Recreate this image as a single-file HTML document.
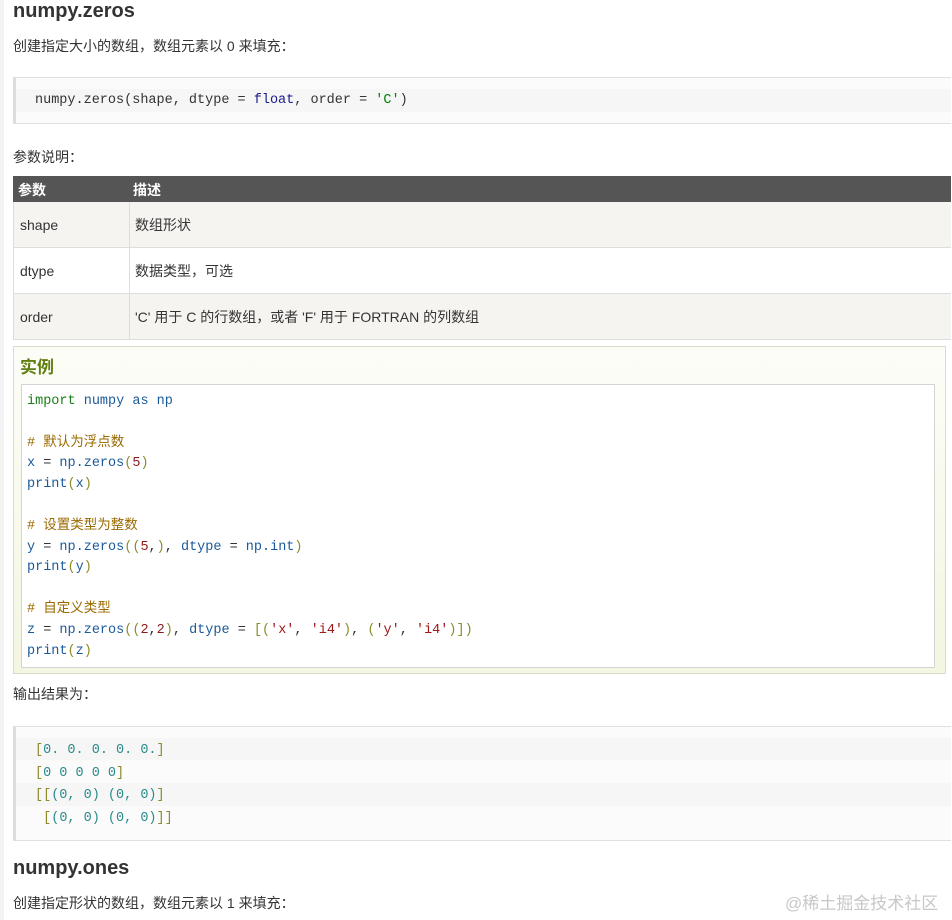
<!DOCTYPE html>
<html><head><meta charset="utf-8"><style>
body{margin:0;width:952px;height:920px;background:#fff;position:relative;overflow:hidden;font-family:"Liberation Sans","Noto Sans CJK SC",sans-serif;color:#333;font-size:14px}
.a{position:absolute;white-space:pre;line-height:18px}
.m{font-family:"Liberation Mono","Noto Sans CJK SC",monospace;font-size:13.5px}
h2{position:absolute;margin:0;font-size:20px;font-weight:bold;color:#333}
.k{color:#1a7f1a}.b{color:#1b5a9a}.c{color:#9a6a00}.n{color:#8b1a1a}.p{color:#8b8b2a}.s{color:#a0171b}.g{color:#008000}.t{color:#2a8a8a}
</style></head><body>
<div style="position:absolute;left:0;top:0;width:4px;height:920px;background:#f3f3f3"></div>
<h2 style="left:13px;top:0px">numpy.zeros</h2>
<div class="a" style="left:13px;top:37px">创建指定大小的数组，数组元素以 0 来填充：</div>
<div style="position:absolute;left:13px;top:77px;width:938px;height:47px;background:#fbfbfb;border-top:1px solid #e0e0e0;border-bottom:1px solid #e0e0e0;border-left:3px solid #ddd;box-sizing:border-box"></div>
<div style="position:absolute;left:16px;top:89px;width:935px;height:23px;background:#f6f6f6"></div>
<div class="a m" style="left:35px;top:92px;color:#333">numpy.zeros(shape, dtype = <span style="color:#1a1a8a">float</span>, order = <span class="g">'C'</span>)</div>
<div class="a" style="left:13px;top:148px">参数说明：</div>
<div style="position:absolute;left:13px;top:176px;width:938px;height:26px;background:#555"></div>
<div class="a" style="left:18px;top:181px;color:#fff;font-weight:bold">参数</div>
<div class="a" style="left:133px;top:181px;color:#fff;font-weight:bold">描述</div>
<div style="position:absolute;left:13px;top:202px;width:938px;height:46px;background:#f6f4f0;border-bottom:1px solid #ddd;box-sizing:border-box"></div>
<div style="position:absolute;left:13px;top:248px;width:938px;height:46px;background:#fff;border-bottom:1px solid #ddd;box-sizing:border-box"></div>
<div style="position:absolute;left:13px;top:294px;width:938px;height:46px;background:#f6f4f0;border-bottom:1px solid #ddd;box-sizing:border-box"></div>
<div style="position:absolute;left:129px;top:202px;width:1px;height:138px;background:#ddd"></div>
<div style="position:absolute;left:13px;top:202px;width:1px;height:138px;background:#ddd"></div>
<div class="a" style="left:20px;top:216px">shape</div><div class="a" style="left:135px;top:216px">数组形状</div>
<div class="a" style="left:20px;top:262px">dtype</div><div class="a" style="left:135px;top:262px">数据类型，可选</div>
<div class="a" style="left:20px;top:308px">order</div><div class="a" style="left:135px;top:308px">'C' 用于 C 的行数组，或者 'F' 用于 FORTRAN 的列数组</div>
<div style="position:absolute;left:13px;top:346px;width:933px;height:328px;background:linear-gradient(#fdfdf8,#f3f6e0);border:1px solid #d8dcc8;box-sizing:border-box"></div>
<div class="a" style="left:20px;top:358px;color:#617f10;font-weight:bold;font-size:17px;line-height:20px">实例</div>
<div style="position:absolute;left:21px;top:384px;width:914px;height:284px;background:#fff;border:1px solid #d4d4d4;box-sizing:border-box"></div>
<div class="a m" style="left:27px;top:392px;line-height:20.8px"><span class="k">import</span> <span class="b">numpy</span> <span class="b">as</span> <span class="b">np</span>

<span class="c"># 默认为浮点数</span>
<span class="b">x</span> = <span class="b">np.zeros</span><span class="p">(</span><span class="n">5</span><span class="p">)</span>
<span class="b">print</span><span class="p">(</span><span class="b">x</span><span class="p">)</span>

<span class="c"># 设置类型为整数</span>
<span class="b">y</span> = <span class="b">np.zeros</span><span class="p">((</span><span class="n">5</span>,<span class="p">)</span>, <span class="b">dtype</span> = <span class="b">np.int</span><span class="p">)</span>
<span class="b">print</span><span class="p">(</span><span class="b">y</span><span class="p">)</span>

<span class="c"># 自定义类型</span>
<span class="b">z</span> = <span class="b">np.zeros</span><span class="p">((</span><span class="n">2</span>,<span class="n">2</span><span class="p">)</span>, <span class="b">dtype</span> = <span class="p">[(</span><span class="s">'x'</span>, <span class="s">'i4'</span><span class="p">)</span>, <span class="p">(</span><span class="s">'y'</span>, <span class="s">'i4'</span><span class="p">)])</span>
<span class="b">print</span><span class="p">(</span><span class="b">z</span><span class="p">)</span></div>
<div class="a" style="left:13px;top:685px">输出结果为：</div>
<div style="position:absolute;left:13px;top:726px;width:938px;height:115px;background:#fbfbfb;border-top:1px solid #e0e0e0;border-bottom:1px solid #e0e0e0;border-left:3px solid #ddd;box-sizing:border-box"></div>
<div style="position:absolute;left:16px;top:738px;width:935px;height:22px;background:#f6f6f6"></div>
<div style="position:absolute;left:16px;top:783px;width:935px;height:23px;background:#f6f6f6"></div>
<div class="a m" style="left:35px;top:740px;line-height:22.7px"><span class="p">[</span><span class="t">0. 0. 0. 0. 0.</span><span class="p">]</span>
<span class="p">[</span><span class="t">0 0 0 0 0</span><span class="p">]</span>
<span class="p">[[</span><span class="t">(0, 0) (0, 0)</span><span class="p">]</span>
 <span class="p">[</span><span class="t">(0, 0) (0, 0)</span><span class="p">]]</span></div>
<h2 style="left:13px;top:857px">numpy.ones</h2>
<div class="a" style="left:13px;top:894px">创建指定形状的数组，数组元素以 1 来填充：</div>
<div class="a" style="left:785px;top:894px;color:#c8c8c8;font-size:17px;line-height:20px">@稀土掘金技术社区</div>
</body></html>
